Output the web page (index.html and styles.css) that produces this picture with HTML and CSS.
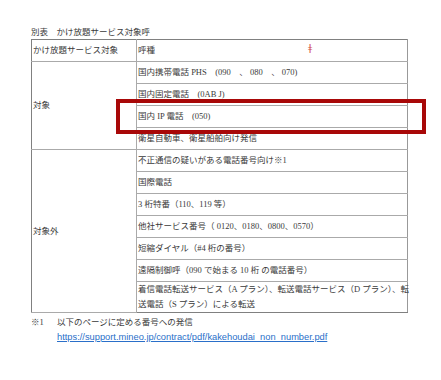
FILE: index.html
```html
<!DOCTYPE html>
<html lang="ja">
<head>
<meta charset="utf-8">
<title>別表 かけ放題サービス対象呼</title>
<link rel="stylesheet" href="styles.css">
</head>
<body>
<div class="page">
  <div class="title">別表　かけ放題サービス対象呼</div>
  <table class="tbl">
    <tr class="r-head">
      <td class="c1">かけ放題サービス対象</td>
      <td class="c2"><span class="htext">呼種</span><span class="mark">ǂ</span></td>
    </tr>
    <tr class="r">
      <td class="c1" rowspan="4">対象</td>
      <td class="c2">国内携帯電話 PHS　(090　、 080　、 070)</td>
    </tr>
    <tr class="r"><td class="c2">国内固定電話　(0AB J)</td></tr>
    <tr class="r"><td class="c2">国内 IP 電話　(050)</td></tr>
    <tr class="r"><td class="c2">衛星自動車、衛星船舶向け発信</td></tr>
    <tr class="r">
      <td class="c1" rowspan="7">対象外</td>
      <td class="c2">不正通信の疑いがある電話番号向け※1</td>
    </tr>
    <tr class="r"><td class="c2">国際電話</td></tr>
    <tr class="r"><td class="c2">3 桁特番（110、119 等）</td></tr>
    <tr class="r"><td class="c2">他社サービス番号（ 0120、0180、0800、0570）</td></tr>
    <tr class="r"><td class="c2">短縮ダイヤル（#4 桁の番号）</td></tr>
    <tr class="r"><td class="c2">遠隔制御呼（090 で始まる 10 桁 の電話番号）</td></tr>
    <tr class="r-two"><td class="c2"><span class="line">着信電話転送サービス（A プラン）、転送電話サービス（D プラン）、転</span><br><span class="line">送電話（S プラン）による転送</span></td></tr>
  </table>
  <div class="note"><span class="note-mark">※1</span><span>以下のページに定める番号への発信</span></div>
  <div class="link-line"><a class="link" href="#">https://support.mineo.jp/contract/pdf/kakehoudai_non_number.pdf</a></div>
  <div class="highlight"></div>
</div>
</body>
</html>
```

FILE: styles.css
```css
html, body {
  margin: 0;
  padding: 0;
  background: #ffffff;
}

.page {
  position: relative;
  width: 441px;
  height: 380px;
  padding: 26px 0 0 31px;
  box-sizing: border-box;
  font-family: "Liberation Serif", "Noto Sans CJK JP", serif;
  font-size: 8.5px;
  color: #3a3a3a;
}

.title {
  line-height: 12px;
  height: 12px;
  margin-bottom: 1px;
}

.tbl {
  border-collapse: collapse;
  width: 377px;
  table-layout: fixed;
  border: 1px solid #808080;
}

.tbl td {
  border: 1px solid #aaaaaa;
  padding: 0 1px;
  line-height: 15px;
  vertical-align: middle;
}

.tbl .c1 {
  width: 102px;
  border-left: 1px solid #808080;
}

.tbl .c2 {
  border-right: 1px solid #999999;
  position: relative;
}

.r-head td,
.r td {
  height: 21px;
}

.r-two td {
  height: 30px;
}

.line {
  white-space: nowrap;
}

.tbl tr:last-child td {
  border-bottom: 1px solid #808080;
}

.tbl tr:first-child td {
  border-top: 1px solid #808080;
}

.mark {
  position: absolute;
  left: 171px;
  top: 3px;
  font-family: "DejaVu Sans", sans-serif;
  font-size: 9px;
  line-height: 10px;
  color: #d04848;
}

.note {
  display: flex;
  margin-top: 2px;
  line-height: 14px;
}

.note-mark {
  width: 26px;
}

.link-line {
  padding-left: 26px;
  line-height: 14px;
  margin-top: 1px;
}

.link {
  font-family: "Liberation Sans", Arial, sans-serif;
  font-size: 9.3px;
  color: #2a6fc9;
  text-decoration: underline;
}

.highlight {
  position: absolute;
  left: 116px;
  top: 99px;
  width: 310px;
  height: 35px;
  box-sizing: border-box;
  border: 4px solid #a80808;
}
```
